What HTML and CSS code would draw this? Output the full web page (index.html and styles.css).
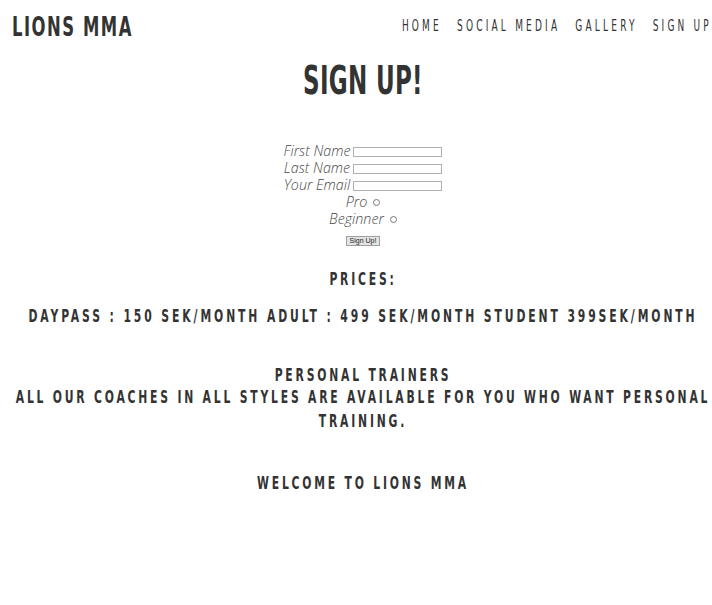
FILE: index.html
```html
<!DOCTYPE html>
<html>
<head>
<meta charset="utf-8">
<link rel="stylesheet" href="styles.css">
</head>
<body>
<header class="topbar">
  <div class="logo">LIONS MMA</div>
  <nav class="nav">
    <a href="#" class="nav-link">HOME</a>
    <a href="#" class="nav-link">SOCIAL MEDIA</a>
    <a href="#" class="nav-link">GALLERY</a>
    <a href="#" class="nav-link">SIGN UP</a>
  </nav>
</header>
<main class="main">
  <h1 class="title">SIGN UP!</h1>
  <form class="form">
    <div class="row"><label class="lbl">First Name</label><input class="field" type="text"></div>
    <div class="row"><label class="lbl">Last Name</label><input class="field" type="text"></div>
    <div class="row"><label class="lbl">Your Email</label><input class="field" type="text"></div>
    <div class="row"><label class="lbl">Pro</label><input class="radio" type="radio" name="lvl"></div>
    <div class="row"><label class="lbl">Beginner</label><input class="radio" type="radio" name="lvl"></div>
    <div class="btnrow"><button class="btn" type="button">Sign Up!</button></div>
  </form>
  <h2 class="h-prices">PRICES:</h2>
  <p class="prices">DAYPASS : 150 SEK/MONTH ADULT : 499 SEK/MONTH STUDENT 399SEK/MONTH</p>
  <p class="trainers">PERSONAL TRAINERS<br>ALL OUR COACHES IN ALL STYLES ARE AVAILABLE FOR YOU WHO WANT PERSONAL TRAINING.</p>
  <p class="welcome">WELCOME TO LIONS MMA</p>
</main>
</body>
</html>
```
FILE: styles.css
```css
* { box-sizing: border-box; }
html, body { min-height: 100%; }
body {
  margin: 0;
  min-height: 100vh;
  background: #fff;
  color: #333;
  font-family: "DejaVu Sans Condensed", "DejaVu Sans", sans-serif;
}
/* condensed display face: DejaVu Condensed stretched vertically */
.logo, .nav-link, .title, .h-prices, .prices, .trainers, .welcome {
  transform: scaleY(1.5);
  transform-origin: 50% 0;
}
.topbar {
  display: flex;
  justify-content: space-between;
  align-items: flex-start;
  height: 52px;
  padding: 0 0 0 12px;
}
.logo {
  margin-top: 9.5px;
  font-size: 18.3px;
  line-height: 21.3px;
  font-weight: bold;
  letter-spacing: 1.5px;
}
.nav { display: flex; gap: 15px; margin-top: 17px; }
.nav-link {
  display: block;
  color: #333;
  text-decoration: none;
  font-size: 10px;
  line-height: 11.6px;
  letter-spacing: 3.2px;
}
.main {
  text-align: center;
  padding: 0 0 60px 14px;
}
.title {
  margin: 7.4px 0 0;
  font-size: 25.6px;
  line-height: 29.8px;
  font-weight: bold;
  letter-spacing: 0.3px;
}
.form {
  margin-top: 52.5px;
  display: flex;
  flex-direction: column;
  align-items: center;
}
.row {
  display: flex;
  align-items: center;
  justify-content: center;
  height: 17px;
}
.lbl {
  font-family: "Open Sans", sans-serif;
  font-style: italic;
  font-weight: 300;
  font-size: 14.3px;
  line-height: 17px;
  color: #4a4a4a;
  margin-right: 3px;
}
.field {
  width: 89px;
  height: 10px;
  border: 1px solid #b0b0b0;
  padding: 0;
  margin: 4px 0 0;
}
.radio {
  width: 7px;
  height: 7px;
  margin: 3px 0 0 3px;
}
.btnrow { margin-top: 9px; display: flex; }
.btn {
  font-family: "Liberation Sans", sans-serif;
  font-size: 7px;
  line-height: 8px;
  height: 10px;
  width: 34px;
  padding: 0;
  border: 1px solid #a0a0a0;
  background: #e4e4e4;
  color: #222;
}
.h-prices, .prices, .trainers, .welcome {
  font-weight: bold;
  font-size: 12px;
  line-height: 14px;
  letter-spacing: 2.8px;
}
.h-prices { margin: 22.4px 0 0; }
.prices { margin: 23px 0 0; letter-spacing: 2.9px; }
.trainers { margin: 45px 0 0; line-height: 15.33px; }
.welcome { margin: 62px 0 0; }
```
